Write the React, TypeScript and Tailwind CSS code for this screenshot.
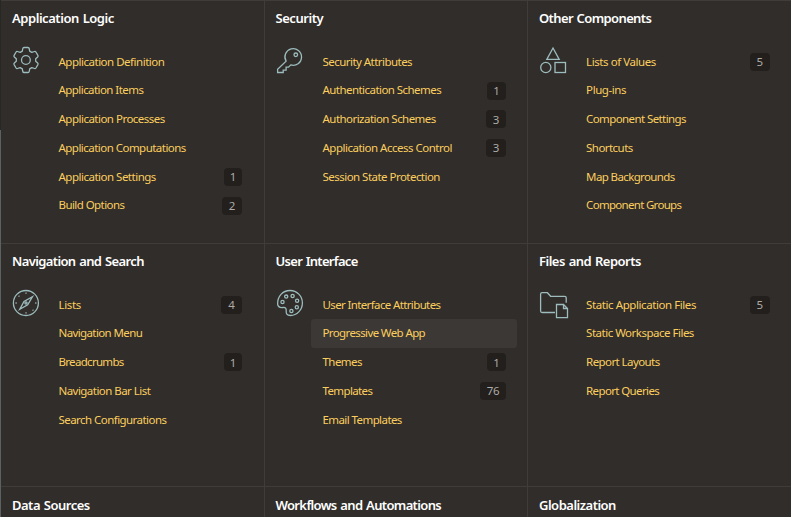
import type { ReactNode } from "react";

type Item = { label: string; track: string; count?: number; badge?: string; active?: boolean };
type Section = { title: string; track: string; icon?: ReactNode; items: Item[] };

const iconProps = {
  width: 32,
  height: 32,
  viewBox: "0 0 32 32",
  fill: "none",
  stroke: "#9dbcbd",
  strokeWidth: 1.3,
  className: "block shrink-0",
};

const GearIcon = () => (
  <svg {...iconProps} strokeLinejoin="round">
    <path d="M14 3.5h4q1 0 1.2 1l.5 2.6 2.1 1.3 2.7-.9q.9-.3 1.4.5l2 3.4q.5.9-.2 1.5l-2 1.8v2.6l2 1.8q.7.6.2 1.5l-2 3.4q-.5.8-1.4.5l-2.7-.9-2.1 1.3-.5 2.6q-.2 1-1.2 1h-4q-1 0-1.2-1l-.5-2.6-2.1-1.3-2.7.9q-.9.3-1.4-.5l-2-3.4q-.5-.9.2-1.5l2-1.8v-2.6l-2-1.8q-.7-.6-.2-1.5l2-3.4q.5-.8 1.4-.5l2.7.9 2.1-1.3.5-2.6q.2-1 1.2-1z" />
    <circle cx="15.9" cy="16" r="4.4" />
  </svg>
);

const KeyIcon = () => (
  <svg {...iconProps}>
    <path d="M12.1 17.2a8.3 8.3 0 1 1 4.7 3.7l-2.3 2.3h-2.4v3h-2.9v2.3H3.6v-3.3z" />
    <circle cx="21.8" cy="10.8" r="1.8" />
  </svg>
);

const ShapesIcon = () => (
  <svg {...iconProps}>
    <path d="M16 4 22.2 15.4H9.8z" />
    <circle cx="8.8" cy="23.5" r="5.1" />
    <rect x="18" y="18.5" width="10.5" height="10" />
  </svg>
);

const CompassIcon = () => (
  <svg {...iconProps}>
    <circle cx="15.9" cy="16" r="12.5" />
    <path d="M22.5 9.7 17.7 17.8 9.7 22.4 14 14.4z" />
    <circle cx="16" cy="16" r="1.1" />
    <path d="M16 5.6v1.2M16 25.2v1.2M5.5 16h1.2M25.2 16h1.2M8.6 8.8l.8.8M22.6 22.8l.8.8" />
  </svg>
);

const PaletteIcon = () => (
  <svg {...iconProps}>
    <path d="M3.6 17.2C3.4 9.2 8.7 3.5 16 3.5c7 0 12.4 5.5 12.4 12.5S22.7 28.5 16.5 28.5c-3.8 0-4.5-2-4.3-4.6.2-2.5-.7-3.7-3.1-3.4-3.2.4-5.1-.2-5.5-3.3z" />
    <circle cx="8.5" cy="15" r="1.6" />
    <circle cx="12.2" cy="9.6" r="1.6" />
    <circle cx="18.6" cy="9" r="1.6" />
    <circle cx="23.1" cy="13.7" r="1.6" />
    <circle cx="22.8" cy="20.2" r="1.6" />
    <circle cx="17.4" cy="24" r="1.6" />
  </svg>
);

const FolderIcon = () => (
  <svg {...iconProps}>
    <path d="M18 25.5H5.1a1.5 1.5 0 0 1-1.5-1.5V7.2a1.5 1.5 0 0 1 1.5-1.5h5.3l3.2 3.6h14.1a1.5 1.5 0 0 1 1.5 1.5v5" />
    <path d="M19.5 17.5h7l4 4v9.2h-11zM26.5 17.5v4h4" />
  </svg>
);

const sections: Section[] = [
  {
    title: "Application Logic",
    track: "tracking-[-0.45px]",
    icon: <GearIcon />,
    items: [
      { label: "Application Definition", track: "tracking-[-0.49px]" },
      { label: "Application Items", track: "tracking-[-0.56px]" },
      { label: "Application Processes", track: "tracking-[-0.51px]" },
      { label: "Application Computations", track: "tracking-[-0.53px]" },
      { label: "Application Settings", track: "tracking-[-0.5px]", count: 1, badge: "w-[18px]" },
      { label: "Build Options", track: "tracking-[-0.57px]", count: 2, badge: "w-5" },
    ],
  },
  {
    title: "Security",
    track: "tracking-[-0.45px]",
    icon: <KeyIcon />,
    items: [
      { label: "Security Attributes", track: "tracking-[-0.54px]" },
      { label: "Authentication Schemes", track: "tracking-[-0.55px]", count: 1, badge: "w-[19px]" },
      { label: "Authorization Schemes", track: "tracking-[-0.54px]", count: 3, badge: "w-5" },
      { label: "Application Access Control", track: "tracking-[-0.5px]", count: 3, badge: "w-5" },
      { label: "Session State Protection", track: "tracking-[-0.53px]" },
    ],
  },
  {
    title: "Other Components",
    track: "tracking-[-0.62px]",
    icon: <ShapesIcon />,
    items: [
      { label: "Lists of Values", track: "tracking-[-0.43px]", count: 5, badge: "w-5" },
      { label: "Plug-ins", track: "tracking-[-0.42px]" },
      { label: "Component Settings", track: "tracking-[-0.6px]" },
      { label: "Shortcuts", track: "tracking-[-0.55px]" },
      { label: "Map Backgrounds", track: "tracking-[-0.62px]" },
      { label: "Component Groups", track: "tracking-[-0.7px]" },
    ],
  },
  {
    title: "Navigation and Search",
    track: "tracking-[-0.62px]",
    icon: <CompassIcon />,
    items: [
      { label: "Lists", track: "tracking-[-0.35px]", count: 4, badge: "w-[21px]" },
      { label: "Navigation Menu", track: "tracking-[-0.61px]" },
      { label: "Breadcrumbs", track: "tracking-[-0.69px]", count: 1, badge: "w-[18px]" },
      { label: "Navigation Bar List", track: "tracking-[-0.54px]" },
      { label: "Search Configurations", track: "tracking-[-0.55px]" },
    ],
  },
  {
    title: "User Interface",
    track: "tracking-[-0.7px]",
    icon: <PaletteIcon />,
    items: [
      { label: "User Interface Attributes", track: "tracking-[-0.63px]" },
      { label: "Progressive Web App", track: "tracking-[-0.62px]", active: true },
      { label: "Themes", track: "tracking-[-0.55px]", count: 1, badge: "w-[19px]" },
      { label: "Templates", track: "tracking-[-0.63px]", count: 76, badge: "w-[26px]" },
      { label: "Email Templates", track: "tracking-[-0.58px]" },
    ],
  },
  {
    title: "Files and Reports",
    track: "tracking-[-0.5px]",
    icon: <FolderIcon />,
    items: [
      { label: "Static Application Files", track: "tracking-[-0.42px]", count: 5, badge: "w-5" },
      { label: "Static Workspace Files", track: "tracking-[-0.5px]" },
      { label: "Report Layouts", track: "tracking-[-0.58px]" },
      { label: "Report Queries", track: "tracking-[-0.63px]" },
    ],
  },
  { title: "Data Sources", track: "tracking-[-0.5px]", items: [] },
  { title: "Workflows and Automations", track: "tracking-[-0.64px]", items: [] },
  { title: "Globalization", track: "tracking-[-0.5px]", items: [] },
];

function Card({ section, column }: { section: Section; column: number }) {
  const inset = ["pl-[11px]", "pl-[10.5px]", "pl-[11px]"][column];
  const listGap = ["", "pl-[0.5px]", "pl-[0.6px]"][column];
  return (
    <section className={`min-w-0 border-t border-r border-[#403c39] ${inset}`}>
      <h2
        className={`h-[46.4px] text-[13px] leading-5 font-semibold whitespace-nowrap text-white [word-spacing:0.9px] ${section.items.length ? "pt-[7px]" : "pt-2"} ${section.track}`}
      >
        {section.title}
      </h2>
      <div className="-ml-[2px] flex">
        <div className="-mt-[3.4px] w-[37px] shrink-0">{section.icon}</div>
        <div className={`shrink-0 ${listGap}`}>
          <ul className="w-[206px]">
            {section.items.map((item) => (
              <li
                key={item.label}
                className={`group flex h-[28.78px] items-center justify-between rounded-[3px] pr-[11px] pl-[11.5px] ${item.active ? "bg-[#3c3835]" : ""}`}
              >
                <a
                  className={`-mt-[0.6px] text-[11.5px] leading-4 whitespace-nowrap text-[#fbce5e] group-first:mt-[0.4px] ${item.track}`}
                >
                  {item.label}
                </a>
                {item.count !== undefined && (
                  <span
                    className={`flex h-[18px] items-center justify-center rounded-[4px] bg-[#221f1c] text-[11.5px] tracking-[-0.3px] text-[#adaba8] ${item.badge}`}
                  >
                    {item.count}
                  </span>
                )}
              </li>
            ))}
          </ul>
        </div>
      </div>
    </section>
  );
}

export default function App() {
  return (
    <div className="flex h-[517px] w-[791px] overflow-hidden bg-[#312d2a] font-['Noto_Sans',sans-serif]">
      <div className="flex w-px shrink-0 flex-col">
        <div className="h-[130px] bg-[#292725]" />
        <div className="flex-1 bg-[#5c6165]" />
      </div>
      <main className="grid shrink-0 grid-cols-[264px_263px_265px] grid-rows-[243px_243px_60px]">
        {sections.map((section, index) => (
          <Card key={section.title} section={section} column={index % 3} />
        ))}
      </main>
    </div>
  );
}
